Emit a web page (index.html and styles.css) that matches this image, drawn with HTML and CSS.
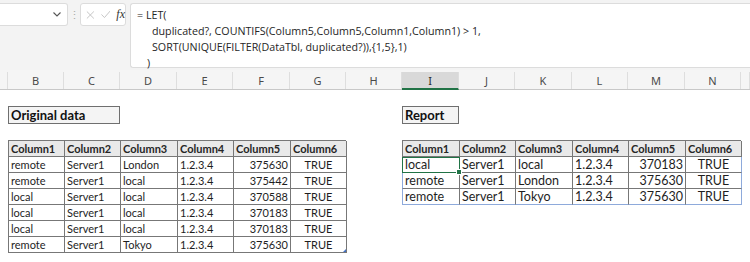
FILE: index.html
```html
<!DOCTYPE html>
<html lang="en">
  <head>
    <meta charset="UTF-8" />
    <title>Duplicates report</title>
    <link rel="stylesheet" href="styles.css">
  </head>
  <body>
    <!-- Formula bar -->
    <div class="formula-bar">
      <div class="name-box">
        <svg class="chevron" width="8" height="5" viewBox="0 0 8 5">
          <path d="M0.5 0.5 L4 4 L7.5 0.5" fill="none" stroke="#555" stroke-width="1.1" />
        </svg>
      </div>
      <div class="grip">⋮</div>
      <div class="fx-box">
        <svg width="10" height="10" viewBox="0 0 10 10">
          <path d="M1 1 L9 9 M9 1 L1 9" stroke="#bdbdbd" stroke-width="1" />
        </svg>
        <svg width="11" height="9" viewBox="0 0 11 9">
          <path d="M0.5 4.5 L4 8 L10.5 0.5" fill="none" stroke="#bdbdbd" stroke-width="1" />
        </svg>
        <span class="fx">fx</span>
      </div>
      <div class="formula">
        <div>= LET(</div>
        <div class="indent">duplicated?, COUNTIFS(Column5,Column5,Column1,Column1) &gt; 1,</div>
        <div class="indent">SORT(UNIQUE(FILTER(DataTbl, duplicated?)),{1,5},1)</div>
        <div class="close">)</div>
      </div>
    </div>

    <!-- Column letters -->
    <div class="col-headers">
      <div class="col"></div>
      <div class="col">B</div>
      <div class="col">C</div>
      <div class="col">D</div>
      <div class="col">E</div>
      <div class="col">F</div>
      <div class="col">G</div>
      <div class="col">H</div>
      <div class="col active">I</div>
      <div class="col">J</div>
      <div class="col">K</div>
      <div class="col">L</div>
      <div class="col">M</div>
      <div class="col">N</div>
      <div class="col"></div>
    </div>

    <!-- Sheet -->
    <div class="sheet">
      <div class="block original">
        <div class="title title-wide">Original data</div>
        <div class="table table-original">
          <div class="th">Column1</div><div class="th">Column2</div><div class="th">Column3</div><div class="th">Column4</div><div class="th">Column5</div><div class="th">Column6</div>
          <div class="td">remote</div><div class="td">Server1</div><div class="td">London</div><div class="td">1.2.3.4</div><div class="td num">375630</div><div class="td bool">TRUE</div>
          <div class="td">remote</div><div class="td">Server1</div><div class="td">local</div><div class="td">1.2.3.4</div><div class="td num">375442</div><div class="td bool">TRUE</div>
          <div class="td">local</div><div class="td">Server1</div><div class="td">local</div><div class="td">1.2.3.4</div><div class="td num">370588</div><div class="td bool">TRUE</div>
          <div class="td">local</div><div class="td">Server1</div><div class="td">local</div><div class="td">1.2.3.4</div><div class="td num">370183</div><div class="td bool">TRUE</div>
          <div class="td">local</div><div class="td">Server1</div><div class="td">local</div><div class="td">1.2.3.4</div><div class="td num">370183</div><div class="td bool">TRUE</div>
          <div class="td">remote</div><div class="td">Server1</div><div class="td">Tokyo</div><div class="td">1.2.3.4</div><div class="td num">375630</div><div class="td bool">TRUE<span class="resize"></span></div>
        </div>
      </div>

      <div class="block report">
        <div class="title title-narrow">Report</div>
        <div class="table table-report">
          <div class="th">Column1</div><div class="th">Column2</div><div class="th">Column3</div><div class="th">Column4</div><div class="th">Column5</div><div class="th">Column6</div>
          <div class="td first selected">local</div><div class="td">Server1</div><div class="td">local</div><div class="td">1.2.3.4</div><div class="td num">370183</div><div class="td bool last">TRUE</div>
          <div class="td first">remote</div><div class="td">Server1</div><div class="td">London</div><div class="td">1.2.3.4</div><div class="td num">375630</div><div class="td bool last">TRUE</div>
          <div class="td first bottom">remote</div><div class="td bottom">Server1</div><div class="td bottom">Tokyo</div><div class="td bottom">1.2.3.4</div><div class="td num bottom">375630</div><div class="td bool last bottom">TRUE</div>
        </div>
      </div>
    </div>
  </body>
</html>
```

FILE: styles.css
```css
* {
  margin: 0;
  padding: 0;
  box-sizing: border-box;
}

body {
  width: 750px;
  height: 262px;
  overflow: hidden;
  background: #fff;
  font-family: "Open Sans", "Noto Sans", sans-serif;
  color: #222;
}

/* Formula bar */
.formula-bar {
  display: flex;
  align-items: flex-start;
  height: 70px;
  padding-top: 3px;
  background: #f3f3f3;
}

.name-box {
  display: flex;
  align-items: center;
  justify-content: flex-end;
  width: 68px;
  height: 23px;
  padding-right: 6px;
  background: #fff;
  border: 1px solid #dcdcdc;
  border-left: none;
  border-radius: 0 3px 3px 0;
}

.grip {
  width: 12px;
  height: 23px;
  line-height: 23px;
  text-align: center;
  font-size: 11px;
  color: #aaa;
}

.fx-box {
  display: flex;
  align-items: center;
  gap: 6px;
  width: 46px;
  height: 23px;
  padding-left: 5px;
  background: #fff;
  border: 1px solid #dcdcdc;
  border-radius: 3px;
}

.fx {
  font-family: "Liberation Serif", serif;
  font-style: italic;
  font-size: 12px;
  color: #333;
}

.formula {
  flex: 1;
  height: 65px;
  margin-left: 4px;
  padding: 3px 0 0 6px;
  background: #fff;
  border: 1px solid #dcdcdc;
  border-right: none;
  border-radius: 3px 0 0 3px;
  font-size: 10.7px;
  line-height: 16px;
  color: #262626;
}

.formula .indent {
  padding-left: 15px;
}

.formula .close {
  padding-left: 10px;
}

/* Column letters */
.col-headers,
.sheet {
  display: grid;
  grid-template-columns: 8px 56px 56px 57px 56px 57px 56px 56px 57px 56px 57px 56px 57px 56px 1fr;
}

.col-headers {
  height: 20px;
  background: #f5f5f5;
  border-bottom: 1px solid #c8c8c8;
}

.col {
  display: flex;
  align-items: center;
  justify-content: center;
  margin-top: 2px;
  border-right: 1px solid #dedede;
  font-family: "Noto Sans", sans-serif;
  font-size: 11px;
  color: #4a4a4a;
}

.col.active {
  background: #d9d9d9;
  border-bottom: 2px solid #217346;
  margin-bottom: -1px;
  color: #2a2a2a;
}

/* Sheet body */
.sheet {
  padding-top: 16px;
}

.block {
  display: flex;
  flex-direction: column;
  gap: 16px;
}

.original {
  grid-column: 2 / 8;
}

.report {
  grid-column: 9 / 15;
}

.title {
  height: 18px;
  padding-left: 2px;
  background: #f4f4f4;
  border: 1px solid #6f6f6f;
  font-family: "Lato", sans-serif;
  font-weight: bold;
  font-size: 13px;
  line-height: 16px;
  color: #111;
}

.title-wide {
  width: 112px;
}

.title-narrow {
  width: 57px;
}

.table {
  position: relative;
  display: grid;
  grid-auto-rows: 16px;
  border-left: 1px solid #777;
  border-top: 1px solid #777;
  font-family: "Lato", sans-serif;
}

.table-original {
  grid-template-columns: 56px 56px 57px 56px 57px 56px;
  font-size: 11px;
}

.table-report {
  grid-template-columns: 57px 56px 57px 56px 57px 56px;
  font-size: 12.5px;
}

.th,
.td {
  position: relative;
  padding-left: 2px;
  border-right: 1px solid #777;
  border-bottom: 1px solid #777;
  white-space: nowrap;
  line-height: 15px;
  color: #1e1e1e;
}

.th {
  background: #e9e9e9;
  font-weight: bold;
  font-size: 11px;
  color: #262626;
}

.td.num {
  text-align: right;
  padding-right: 2px;
}

.td.bool {
  text-align: center;
  padding-left: 0;
}

/* Report table: blue outer edge */
.table-report .td.first {
  border-left: 1px solid #8eaadb;
  margin-left: -1px;
}

.table-report .td.last {
  border-right-color: #8eaadb;
}

.table-report .td.bottom {
  border-bottom-color: #8eaadb;
}

.td.selected {
  outline: 1.5px solid #217346;
  outline-offset: -1px;
  z-index: 1;
}

.td.selected::after {
  content: "";
  position: absolute;
  right: -3px;
  bottom: -3px;
  width: 4px;
  height: 4px;
  background: #217346;
  border: 1px solid #fff;
}

.resize {
  position: absolute;
  right: 0;
  bottom: 0;
  width: 0;
  height: 0;
  border-left: 3px solid transparent;
  border-bottom: 3px solid #4472c4;
}
```
